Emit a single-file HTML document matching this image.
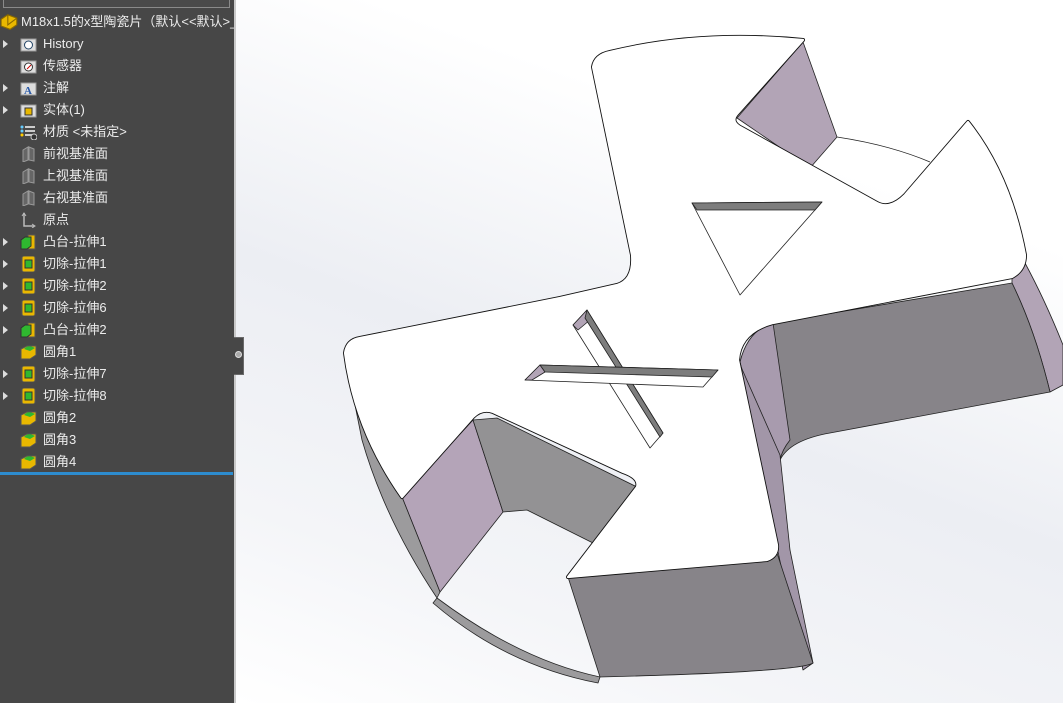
<!DOCTYPE html>
<html><head><meta charset="utf-8"><style>
*{margin:0;padding:0;box-sizing:border-box}
body{width:1063px;height:703px;overflow:hidden;position:relative;font-family:"Liberation Sans","Noto Sans CJK SC",sans-serif;background:#fff}
#panel{position:absolute;left:0;top:0;width:234px;height:703px;background:#474747}
#edge{position:absolute;left:234px;top:0;width:2px;height:703px;background:#c9c9c9}
#tab{position:absolute;left:234px;top:337px;width:10px;height:38px;background:#474747;border:1px solid #6a6a6a;border-left:none}
#tab i{position:absolute;left:1px;top:13px;width:7px;height:7px;border-radius:50%;background:#aaa;border:1px solid #ddd}
#topbox{position:absolute;left:3px;top:-2px;width:227px;height:10px;border:1px solid #8a8a8a;background:#4a4a4a}
.row{position:absolute;left:0;height:22px;width:234px;color:#ececec;font-size:13px;line-height:22px;white-space:nowrap;overflow:hidden}
.row .ar{position:absolute;left:3px;top:7px;width:0;height:0;border-top:4px solid transparent;border-bottom:4px solid transparent;border-left:5px solid #ddd}
.row .ic{position:absolute;left:20px;top:3px;width:17px;height:16px}
.row .t{position:absolute;left:43px;top:0}
#blue{position:absolute;left:0;top:472px;width:233px;height:3px;background:#2d8ccf}
#view{position:absolute;left:236px;top:0;width:827px;height:703px;background:linear-gradient(200deg,#ffffff 0%,#ffffff 25%,#eceef3 55%,#f4f5f8 80%,#ffffff 100%)}
</style></head><body>
<div id="panel">
<div id="topbox"></div>
<div class="row" style="top:11px"><svg class="ic" style="left:0;top:1px;width:19px;height:19px" viewBox="0 0 17 16"><path d="M1 6l6-4 8 3v6l-6 4-8-3z" fill="#e9b800" stroke="#8a6a00"/><path d="M7 2v9l8-6" fill="none" stroke="#8a6a00"/></svg><span class="t" style="left:21px">M18x1.5的x型陶瓷片（默认&lt;&lt;默认&gt;_显</span></div>
<div class="row" style="top:33px"><i class="ar"></i><svg class="ic" viewBox="0 0 17 16"><rect x="1" y="3" width="15" height="12" fill="#ddd" stroke="#999"/><circle cx="8.5" cy="9" r="4" fill="#fff" stroke="#246"/></svg><span class="t">History</span></div>
<div class="row" style="top:55px"><svg class="ic" viewBox="0 0 17 16"><rect x="1" y="3" width="15" height="12" fill="#ddd" stroke="#999"/><circle cx="8.5" cy="9" r="4" fill="#fff" stroke="#333"/><path d="M7 11l4-4" stroke="#c00"/></svg><span class="t">传感器</span></div>
<div class="row" style="top:77px"><i class="ar"></i><svg class="ic" viewBox="0 0 17 16"><rect x="1" y="3" width="15" height="12" fill="#ddd" stroke="#999"/><text x="4" y="14" font-size="11" font-weight="bold" fill="#2a5aa8" font-family="Liberation Serif">A</text></svg><span class="t">注解</span></div>
<div class="row" style="top:99px"><i class="ar"></i><svg class="ic" viewBox="0 0 17 16"><rect x="1" y="3" width="15" height="12" fill="#ddd" stroke="#999"/><rect x="5" y="6" width="7" height="7" fill="#e9b800" stroke="#333"/></svg><span class="t">实体(1)</span></div>
<div class="row" style="top:121px"><svg class="ic" viewBox="0 0 17 16"><path d="M5 3h10M5 7h10M5 11h8" stroke="#ccc" stroke-width="2"/><circle cx="2" cy="3" r="1.5" fill="#6cf"/><circle cx="2" cy="7" r="1.5" fill="#6cf"/><circle cx="2" cy="11" r="1.5" fill="#fc0"/><circle cx="14" cy="13" r="3" fill="#333" stroke="#ccc"/></svg><span class="t">材质 &lt;未指定&gt;</span></div>
<div class="row" style="top:143px"><svg class="ic" viewBox="0 0 17 16"><path d="M3 4l5-3v13l-5 2z M9 1l5 2v12l-5-1z" fill="#666" stroke="#999"/></svg><span class="t">前视基准面</span></div>
<div class="row" style="top:165px"><svg class="ic" viewBox="0 0 17 16"><path d="M3 4l5-3v13l-5 2z M9 1l5 2v12l-5-1z" fill="#666" stroke="#999"/></svg><span class="t">上视基准面</span></div>
<div class="row" style="top:187px"><svg class="ic" viewBox="0 0 17 16"><path d="M3 4l5-3v13l-5 2z M9 1l5 2v12l-5-1z" fill="#666" stroke="#999"/></svg><span class="t">右视基准面</span></div>
<div class="row" style="top:209px"><svg class="ic" viewBox="0 0 17 16"><path d="M4 1v13h10" fill="none" stroke="#bbb" stroke-width="1.5"/><path d="M2 4l2-3 2 3M12 12l3 2-3 2" fill="none" stroke="#bbb"/></svg><span class="t">原点</span></div>
<div class="row" style="top:231px"><i class="ar"></i><svg class="ic" viewBox="0 0 17 16"><rect x="8" y="1" width="7" height="14" fill="#e9b800" stroke="#555"/><path d="M1 6l4-3h6v9l-4 3H1z" fill="#2fb82f" stroke="#333"/></svg><span class="t">凸台-拉伸1</span></div>
<div class="row" style="top:253px"><i class="ar"></i><svg class="ic" viewBox="0 0 17 16"><rect x="2" y="0" width="13" height="16" rx="2" fill="#e9b800" stroke="#555"/><rect x="5" y="4" width="7" height="8" fill="#2fb82f" stroke="#333"/></svg><span class="t">切除-拉伸1</span></div>
<div class="row" style="top:275px"><i class="ar"></i><svg class="ic" viewBox="0 0 17 16"><rect x="2" y="0" width="13" height="16" rx="2" fill="#e9b800" stroke="#555"/><rect x="5" y="4" width="7" height="8" fill="#2fb82f" stroke="#333"/></svg><span class="t">切除-拉伸2</span></div>
<div class="row" style="top:297px"><i class="ar"></i><svg class="ic" viewBox="0 0 17 16"><rect x="2" y="0" width="13" height="16" rx="2" fill="#e9b800" stroke="#555"/><rect x="5" y="4" width="7" height="8" fill="#2fb82f" stroke="#333"/></svg><span class="t">切除-拉伸6</span></div>
<div class="row" style="top:319px"><i class="ar"></i><svg class="ic" viewBox="0 0 17 16"><rect x="8" y="1" width="7" height="14" fill="#e9b800" stroke="#555"/><path d="M1 6l4-3h6v9l-4 3H1z" fill="#2fb82f" stroke="#333"/></svg><span class="t">凸台-拉伸2</span></div>
<div class="row" style="top:341px"><svg class="ic" viewBox="0 0 17 16"><path d="M1 5l6-3h9v9l-6 4H1z" fill="#e9b800" stroke="#555"/><path d="M4 5q4-5 11-1l-5 3z" fill="#2fb82f"/></svg><span class="t">圆角1</span></div>
<div class="row" style="top:363px"><i class="ar"></i><svg class="ic" viewBox="0 0 17 16"><rect x="2" y="0" width="13" height="16" rx="2" fill="#e9b800" stroke="#555"/><rect x="5" y="4" width="7" height="8" fill="#2fb82f" stroke="#333"/></svg><span class="t">切除-拉伸7</span></div>
<div class="row" style="top:385px"><i class="ar"></i><svg class="ic" viewBox="0 0 17 16"><rect x="2" y="0" width="13" height="16" rx="2" fill="#e9b800" stroke="#555"/><rect x="5" y="4" width="7" height="8" fill="#2fb82f" stroke="#333"/></svg><span class="t">切除-拉伸8</span></div>
<div class="row" style="top:407px"><svg class="ic" viewBox="0 0 17 16"><path d="M1 5l6-3h9v9l-6 4H1z" fill="#e9b800" stroke="#555"/><path d="M4 5q4-5 11-1l-5 3z" fill="#2fb82f"/></svg><span class="t">圆角2</span></div>
<div class="row" style="top:429px"><svg class="ic" viewBox="0 0 17 16"><path d="M1 5l6-3h9v9l-6 4H1z" fill="#e9b800" stroke="#555"/><path d="M4 5q4-5 11-1l-5 3z" fill="#2fb82f"/></svg><span class="t">圆角3</span></div>
<div class="row" style="top:451px"><svg class="ic" viewBox="0 0 17 16"><path d="M1 5l6-3h9v9l-6 4H1z" fill="#e9b800" stroke="#555"/><path d="M4 5q4-5 11-1l-5 3z" fill="#2fb82f"/></svg><span class="t">圆角4</span></div>
<div id="blue"></div>
</div>
<div id="edge"></div>
<div id="view"></div>
<div id="tab"><i></i></div>
<svg style="position:absolute;left:0;top:0" width="1063" height="703" viewBox="0 0 1063 703">
<g stroke="#222" stroke-width="0.8" stroke-linejoin="round">
<path d="M1012 277 L1025 263 Q1045 300 1063 345 L1063 385 L1050 392 Q1035 330 1012 283 Z" fill="#b2a4b6"/>
<path d="M773 323 L1012 283 Q1035 330 1050 392 L830 433 Q790 440 780 460 L760 460 Q745 400 740 362 Q748 330 773 323 Z" fill="#878489"/>
<path d="M740 362 Q748 330 773 323 L790 440 Q782 450 780 460 L765 460 Z" fill="#a89bae"/>
<path d="M738 360 L780 455 L790 550 L813 663 L803 670 L777 547 Z" fill="#a296a8"/>
<path d="M568 577 L767 560 L777 553 L813 663 Q800 672 600 677 Z" fill="#878489"/>
<path d="M402 497 L473 420 L503 512 L440 592 Z" fill="#b4a4b8"/>
<path d="M473 420 L497 418 L637 487 L597 545 L527 510 L503 512 Z" fill="#939294"/>
<path d="M345 355 Q355 420 402 497 L440 592 L437 598 Q385 520 362 440 Z" fill="#9c9b9d"/>
<path d="M437 598 Q520 660 600 677 L598 683 Q505 665 433 603 Z" fill="#9c9b9d"/>
<path d="M803 42 L837 137 L810 168 L737 118 Z" fill="#b2a4b6"/>
<path d="M837 137 Q890 145 930 162" fill="none"/>
</g>
<path id="face" d="M593 67 Q595 55 610 52 Q700 30 803 40 L737 114 Q730 122 742 128 L877 203 Q890 210 905 195 L968 122 Q1010 175 1025 255 Q1025 270 1012 277 L773 323 Q740 332 738 360 L777 545 Q778 556 767 560 L568 577 L637 487 Q640 478 623 472 L493 412 Q482 408 473 417 L402 497 Q355 430 345 353 Q347 340 360 338 L560 298 L617 285 Q634 280 632 255 Z" fill="#fff" stroke="#111" stroke-width="4" stroke-linejoin="round"/>
<path d="M593 67 Q595 55 610 52 Q700 30 803 40 L737 114 Q730 122 742 128 L877 203 Q890 210 905 195 L968 122 Q1010 175 1025 255 Q1025 270 1012 277 L773 323 Q740 332 738 360 L777 545 Q778 556 767 560 L568 577 L637 487 Q640 478 623 472 L493 412 Q482 408 473 417 L402 497 Q355 430 345 353 Q347 340 360 338 L560 298 L617 285 Q634 280 632 255 Z" fill="#fff" stroke="#fff" stroke-width="2.2" stroke-linejoin="round"/>
<g stroke="#222" stroke-width="0.8" stroke-linejoin="round">
<path d="M692 203 L822 202 L740 295 Z" fill="#fff"/>
<path d="M692 203 L822 202 L815 210 L697 210 Z" fill="#7d7d7d"/>
<path d="M573 325 L587 310 L663 433 L650 448 Z" fill="#fff"/>
<path d="M573 325 L587 310 L590 320 L578 330Z" fill="#b2a4b6"/>
<path d="M587 310 L663 433 L660 437 L585 318Z" fill="#7d7d7d"/>
<path d="M525 380 L540 365 L718 370 L703 387 Z" fill="#fff"/>
<path d="M525 380 L540 365 L545 372 L532 380Z" fill="#b2a4b6"/>
<path d="M540 365 L718 370 L712 377 L545 372Z" fill="#7d7d7d"/>
</g>
</svg>
</body></html>
